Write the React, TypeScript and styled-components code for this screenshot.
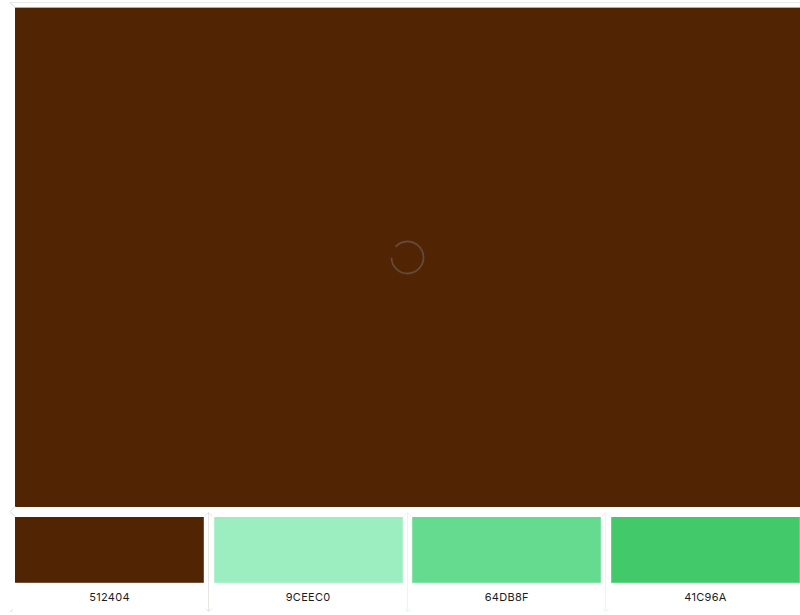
import React from "react";
import styled, { createGlobalStyle } from "styled-components";

const Global = createGlobalStyle`
  html, body { margin: 0; padding: 0; background: #fff; overflow: hidden; }
  body { font-family: "Inter", "Liberation Sans", sans-serif; }
`;

const Page = styled.div`
  position: relative;
  width: 800px;
  height: 615px;
  padding: 8px 0 0 15px;
  box-sizing: border-box;
  overflow: hidden;
`;

const Hero = styled.div`
  height: 499px;
  background: #512404;
  box-shadow: 0 -1px 0 #b5aca5;
  display: flex;
  align-items: center;
  justify-content: center;
`;

const Spinner = styled.svg`
  display: block;
  width: 35px;
  height: 35px;
  margin: -1px 0 0 -1px;
`;

const Swatches = styled.div`
  margin-top: 10px;
  display: grid;
  grid-template-columns: repeat(4, 189px);
  column-gap: 9.67px;
`;

const Swatch = styled.div`
  display: flex;
  flex-direction: column;

  &:not(:first-child) > div:first-child {
    box-shadow: inset 1px 0 0 rgba(255, 255, 255, 0.2), inset -1px 0 0 rgba(255, 255, 255, 0.2),
      inset 0 -1px 0 rgba(255, 255, 255, 0.2);
  }
`;

const Colour = styled.div<{ $c: string }>`
  height: 66px;
  background: ${(p) => p.$c};
  box-shadow: inset -1px 0 0 rgba(255, 255, 255, 0.2), inset 0 -1px 0 rgba(255, 255, 255, 0.2);
`;

const Code = styled.div`
  margin-top: 7px;
  text-align: center;
  font-size: 11px;
  font-weight: 400;
  line-height: 14px;
  letter-spacing: 0.3px;
  color: #1c1c1c;
`;

const Guide = styled.svg<{ $x: number; $y: number }>`
  position: absolute;
  left: ${(p) => p.$x}px;
  top: ${(p) => p.$y}px;
  overflow: visible;
`;

const swatches = [
  ["512404", "#512404", "#e8e4df"],
  ["9CEEC0", "#9ceec0", "#e6f9ee"],
  ["64DB8F", "#64db8f", "#e6f9ee"],
  ["41C96A", "#41c96a", "#fff"],
];

export default function App() {
  return (
    <Page>
      <Global />
      <Hero>
        <Spinner viewBox="0 0 35 35">
          <circle
            cx="17.5"
            cy="17.5"
            r="16"
            fill="none"
            stroke="#64493a"
            strokeWidth="1.8"
            strokeDasharray="88 12.5"
            transform="rotate(222 17.5 17.5)"
          />
        </Spinner>
      </Hero>
      <Swatches>
        {swatches.map(([code, colour]) => (
          <Swatch key={code}>
            <Colour $c={colour} />
            <Code>{code}</Code>
          </Swatch>
        ))}
      </Swatches>
      <Guide $x={9} $y={2} width="8" height="8">
        <path d="M791 0.5H1L6 5.5" fill="none" stroke="#ece8e4" strokeWidth="1.2" />
      </Guide>
      <Guide $x={9} $y={506} width="8" height="12">
        <path d="M6 0.5L1 5.5L6 10.5" fill="none" stroke="#e0dbd6" strokeWidth="1" />
      </Guide>
      <Guide $x={9} $y={609} width="6" height="4">
        <path d="M1 3L4 0.5" fill="none" stroke="#e0dbd6" strokeWidth="1" />
      </Guide>
      {swatches.slice(0, 3).map(([code, , line], i) => (
        <Guide key={code} $x={204 + i * 198.67} $y={512} width="9" height="101">
          <path
            d="M4.5 0.5V99.5M0.5 4.5L4.5 0.5L8.5 4.5M1.5 96.5L4.5 99.5L7.5 96.5"
            fill="none"
            stroke={line}
            strokeWidth="1"
          />
        </Guide>
      ))}
    </Page>
  );
}
